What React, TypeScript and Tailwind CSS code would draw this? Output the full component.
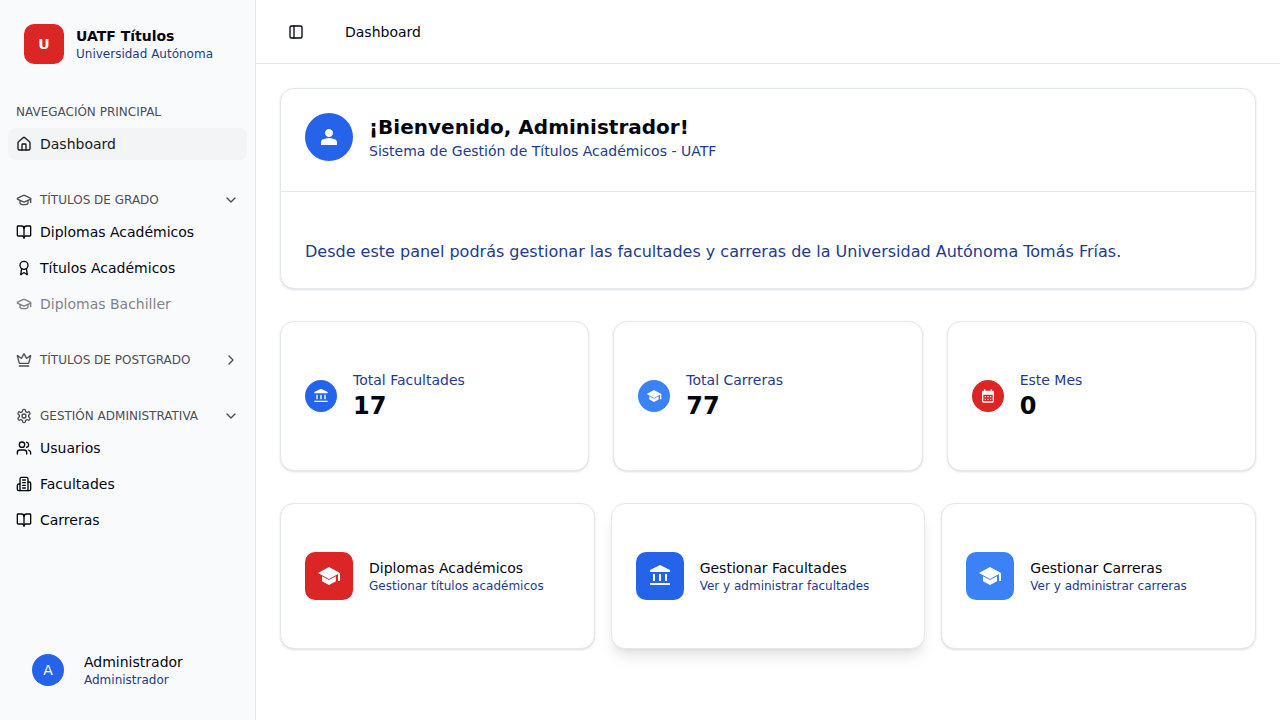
import type { ReactNode } from 'react';
import {
  Award,
  BookOpen,
  ChevronDown,
  ChevronRight,
  Crown,
  GraduationCap,
  House,
  PanelLeft,
  Users,
} from 'lucide-react';

const paths = {
  person:
    'M12 12q-1.65 0-2.825-1.175T8 8t1.175-2.825T12 4t2.825 1.175T16 8t-1.175 2.825T12 12m-8 8v-2.8q0-.85.438-1.562T5.6 14.55q1.55-.775 3.15-1.162T12 13t3.25.388t3.15 1.162q.725.375 1.163 1.088T20 17.2V20z',
  bank: 'M5 17v-7h2v7zm6 0v-7h2v7zm-9 4v-2h20v2zm15-4v-7h2v7zM2 8V6l10-5l10 5v2z',
  school: 'M21 17v-6.9L12 15L1 9l11-6l11 6v8zm-9 4l-7-3.8v-5l7 3.8l7-3.8v5z',
  calendar:
    'M12 14q-.425 0-.712-.288T11 13t.288-.712T12 12t.713.288T13 13t-.288.713T12 14m-4 0q-.425 0-.712-.288T7 13t.288-.712T8 12t.713.288T9 13t-.288.713T8 14m8 0q-.425 0-.712-.288T15 13t.288-.712T16 12t.713.288T17 13t-.288.713T16 14m-4 4q-.425 0-.712-.288T11 17t.288-.712T12 16t.713.288T13 17t-.288.713T12 18m-4 0q-.425 0-.712-.288T7 17t.288-.712T8 16t.713.288T9 17t-.288.713T8 18m8 0q-.425 0-.712-.288T15 17t.288-.712T16 16t.713.288T17 17t-.288.713T16 18M5 22q-.825 0-1.412-.587T3 20V6q0-.825.588-1.412T5 4h1V2h2v2h8V2h2v2h1q.825 0 1.413.588T21 6v14q0 .825-.587 1.413T19 22zm0-2h14V10H5z',
};

type GlyphName = keyof typeof paths;

function Glyph({ name, size }: { name: GlyphName; size: number }) {
  return (
    <svg width={size} height={size} viewBox="0 0 24 24" fill="currentColor">
      <path d={paths[name]} />
    </svg>
  );
}

function LineIcon({ children }: { children: ReactNode }) {
  return (
    <svg
      width={16}
      height={16}
      viewBox="0 0 24 24"
      fill="none"
      stroke="currentColor"
      strokeWidth={2}
      strokeLinecap="round"
      strokeLinejoin="round"
    >
      {children}
    </svg>
  );
}

function Building() {
  return (
    <LineIcon>
      <path d="M6 22V4a2 2 0 0 1 2-2h8a2 2 0 0 1 2 2v18Z" />
      <path d="M6 12H4a2 2 0 0 0-2 2v6a2 2 0 0 0 2 2h2" />
      <path d="M18 9h2a2 2 0 0 1 2 2v9a2 2 0 0 1-2 2h-2" />
      <path d="M10 6h4" />
      <path d="M10 10h4" />
      <path d="M10 14h4" />
      <path d="M10 18h4" />
    </LineIcon>
  );
}

function Gear() {
  return (
    <LineIcon>
      <path d="M12.22 2h-.44a2 2 0 0 0-2 2v.18a2 2 0 0 1-1 1.73l-.43.25a2 2 0 0 1-2 0l-.15-.08a2 2 0 0 0-2.73.73l-.22.38a2 2 0 0 0 .73 2.73l.15.1a2 2 0 0 1 1 1.72v.51a2 2 0 0 1-1 1.74l-.15.09a2 2 0 0 0-.73 2.73l.22.38a2 2 0 0 0 2.73.73l.15-.08a2 2 0 0 1 2 0l.43.25a2 2 0 0 1 1 1.73V20a2 2 0 0 0 2 2h.44a2 2 0 0 0 2-2v-.18a2 2 0 0 1 1-1.73l.43-.25a2 2 0 0 1 2 0l.15.08a2 2 0 0 0 2.73-.73l.22-.39a2 2 0 0 0-.73-2.73l-.15-.08a2 2 0 0 1-1-1.74v-.5a2 2 0 0 1 1-1.74l.15-.09a2 2 0 0 0 .73-2.73l-.22-.38a2 2 0 0 0-2.73-.73l-.15.08a2 2 0 0 1-2 0l-.43-.25a2 2 0 0 1-1-1.73V4a2 2 0 0 0-2-2z" />
      <circle cx="12" cy="12" r="3" />
    </LineIcon>
  );
}

function NavItem({ icon, label, active, disabled }: { icon: ReactNode; label: string; active?: boolean; disabled?: boolean }) {
  return (
    <li
      className={`flex h-8 items-center gap-2 rounded-[8px] px-2 text-sm ${active ? 'bg-[#f3f4f6] text-[#18181b]' : ''} ${disabled ? 'opacity-50' : ''}`}
    >
      {icon}
      <span>{label}</span>
    </li>
  );
}

function NavGroup({ icon, label, open, children }: { icon?: ReactNode; label: string; open?: boolean; children?: ReactNode }) {
  return (
    <section className="px-2">
      <div className="flex h-8 items-center gap-2 px-2 text-xs text-[#4c4e56]">
        {icon}
        <span className="grow">{label}</span>
        {icon && (open ? <ChevronDown size={16} /> : <ChevronRight size={16} />)}
      </div>
      {children && <ul className="flex flex-col gap-1">{children}</ul>}
    </section>
  );
}

function Sidebar() {
  return (
    <aside className="flex w-64 shrink-0 flex-col border-r border-[#e2e4ec] bg-[#f9fafc]">
      <div className="flex items-center gap-3 p-6">
        <div className="flex size-10 items-center justify-center rounded-[10px] bg-[#dc2626] text-sm font-bold text-white">U</div>
        <div>
          <p className="text-sm font-bold">UATF Títulos</p>
          <p className="text-xs text-[#1e3a8a]">Universidad Autónoma</p>
        </div>
      </div>
      <nav className="flex grow flex-col gap-6 pt-2">
        <NavGroup label="NAVEGACIÓN PRINCIPAL">
          <NavItem icon={<House size={16} />} label="Dashboard" active />
        </NavGroup>
        <NavGroup icon={<GraduationCap size={16} />} label="TÍTULOS DE GRADO" open>
          <NavItem icon={<BookOpen size={16} />} label="Diplomas Académicos" />
          <NavItem icon={<Award size={16} />} label="Títulos Académicos" />
          <NavItem icon={<GraduationCap size={16} />} label="Diplomas Bachiller" disabled />
        </NavGroup>
        <NavGroup icon={<Crown size={16} />} label="TÍTULOS DE POSTGRADO" />
        <NavGroup icon={<Gear />} label="GESTIÓN ADMINISTRATIVA" open>
          <NavItem icon={<Users size={16} />} label="Usuarios" />
          <NavItem icon={<Building />} label="Facultades" />
          <NavItem icon={<BookOpen size={16} />} label="Carreras" />
        </NavGroup>
      </nav>
      <div className="flex items-center gap-5 px-8 pb-8">
        <div className="flex size-8 items-center justify-center rounded-full bg-[#2563eb] text-sm text-white">A</div>
        <div>
          <p className="text-sm">Administrador</p>
          <p className="text-xs text-[#1e3a8a]">Administrador</p>
        </div>
      </div>
    </aside>
  );
}

function StatCard({ icon, color, label, value }: { icon: GlyphName; color: string; label: string; value: number }) {
  return (
    <div className="flex items-center gap-4 rounded-[14px] border border-[#e2e8f0] bg-white px-6 py-12 shadow-sm">
      <div className={`flex size-8 items-center justify-center rounded-full text-white ${color}`}>
        <Glyph name={icon} size={16} />
      </div>
      <div>
        <p className="text-sm text-[#1e3a8a]">{label}</p>
        <p className="text-2xl font-bold">{value}</p>
      </div>
    </div>
  );
}

function ActionCard({ icon, color, title, text, raised }: { icon: GlyphName; color: string; title: string; text: string; raised?: boolean }) {
  return (
    <div
      className={`flex items-center gap-4 rounded-[14px] border border-[#e2e8f0] bg-white px-6 py-12 ${raised ? 'shadow-lg' : 'shadow-sm'}`}
    >
      <div className={`flex size-12 items-center justify-center rounded-[10px] text-white ${color}`}>
        <Glyph name={icon} size={24} />
      </div>
      <div>
        <p className="text-sm">{title}</p>
        <p className="text-xs text-[#1e3a8a]">{text}</p>
      </div>
    </div>
  );
}

export default function App() {
  return (
    <div className="flex h-screen w-full overflow-hidden bg-white font-['DejaVu_Sans',sans-serif] text-[#020611]">
      <Sidebar />
      <div className="flex min-w-0 grow flex-col">
        <header className="flex h-16 shrink-0 items-center gap-[41px] border-b border-[#e2e8f0] px-8 text-sm">
          <PanelLeft size={16} />
          <span>Dashboard</span>
        </header>
        <main className="flex flex-col gap-8 p-6">
          <section className="rounded-[14px] border border-[#e2e8f0] bg-white shadow-sm">
            <div className="flex items-center gap-4 border-b border-[#e2e8f0] px-6 pt-6 pb-[30px]">
              <div className="flex size-12 items-center justify-center rounded-full bg-[#2563eb] text-white">
                <Glyph name="person" size={24} />
              </div>
              <div>
                <h1 className="text-xl font-bold">¡Bienvenido, Administrador!</h1>
                <p className="text-sm text-[#1e3a8a]">Sistema de Gestión de Títulos Académicos - UATF</p>
              </div>
            </div>
            <p className="px-6 pt-12 pb-6 text-base text-[#1e3a8a]">
              Desde este panel podrás gestionar las facultades y carreras de la Universidad Autónoma Tomás Frías.
            </p>
          </section>
          <section className="grid grid-cols-3 gap-6">
            <StatCard icon="bank" color="bg-[#2563eb]" label="Total Facultades" value={17} />
            <StatCard icon="school" color="bg-[#3b82f6]" label="Total Carreras" value={77} />
            <StatCard icon="calendar" color="bg-[#dc2626]" label="Este Mes" value={0} />
          </section>
          <section className="grid grid-cols-3 gap-4">
            <ActionCard icon="school" color="bg-[#dc2626]" title="Diplomas Académicos" text="Gestionar títulos académicos" />
            <ActionCard icon="bank" color="bg-[#2563eb]" title="Gestionar Facultades" text="Ver y administrar facultades" raised />
            <ActionCard icon="school" color="bg-[#3b82f6]" title="Gestionar Carreras" text="Ver y administrar carreras" />
          </section>
        </main>
      </div>
    </div>
  );
}
